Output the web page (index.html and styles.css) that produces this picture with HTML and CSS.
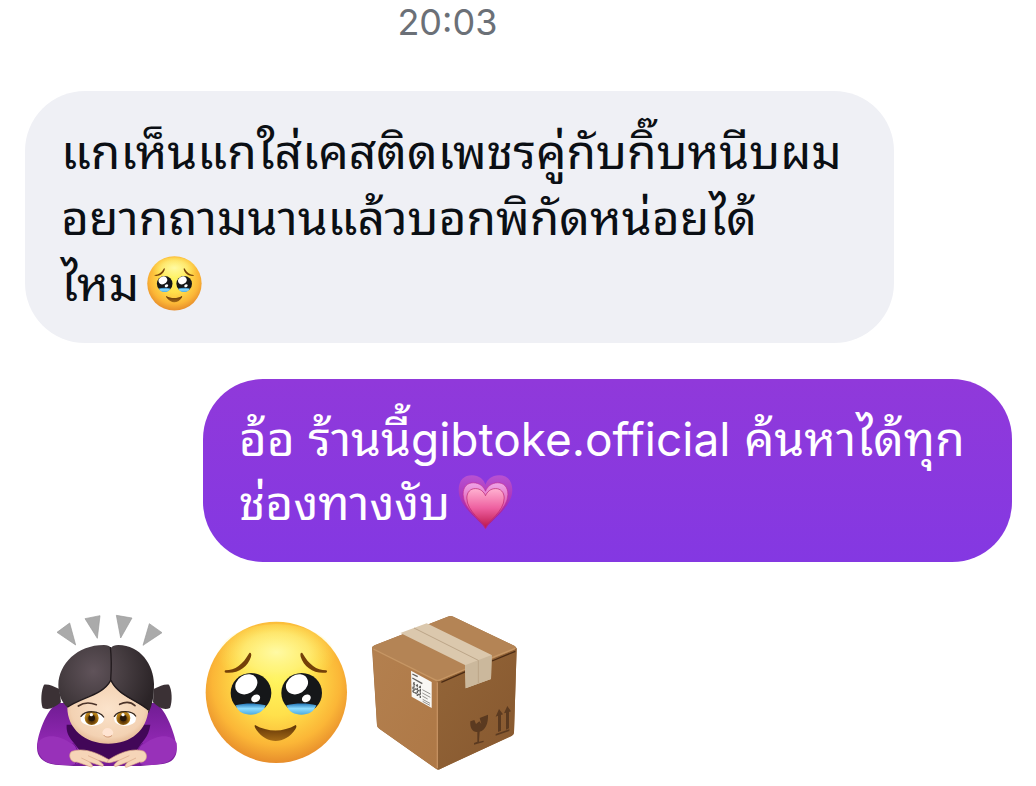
FILE: index.html
```
<!DOCTYPE html>
<html lang="th">
<head>
  <meta charset="UTF-8" />
  <meta name="viewport" content="width=device-width, initial-scale=1" />
  <title>Chat</title>
  <link rel="stylesheet" href="styles.css">
</head>
<body>
  <!-- shared drawings -->
  <svg class="defs" aria-hidden="true">
    <defs>
      <radialGradient id="skin-edge" cx="50%" cy="42%" r="58%">
        <stop offset="0" stop-color="#fff45c" />
        <stop offset=".42" stop-color="#ffe04b" />
        <stop offset=".78" stop-color="#fbb637" />
        <stop offset="1" stop-color="#e78d2b" />
      </radialGradient>
      <radialGradient id="skin-shine" cx="50%" cy="40%" r="50%">
        <stop offset="0" stop-color="#fffcae" stop-opacity=".9" />
        <stop offset=".55" stop-color="#fff88a" stop-opacity=".6" />
        <stop offset="1" stop-color="#fff45c" stop-opacity="0" />
      </radialGradient>
      <linearGradient id="tear" x1="0" y1="0" x2="0" y2="1">
        <stop offset="0" stop-color="#2479ba" />
        <stop offset=".45" stop-color="#8bdcff" />
        <stop offset="1" stop-color="#4dabe0" />
      </linearGradient>
      <linearGradient id="mouth" x1="0" y1="0" x2="0" y2="1">
        <stop offset="0" stop-color="#5e3306" />
        <stop offset="1" stop-color="#a56a17" />
      </linearGradient>
    </defs>
    <symbol id="face" viewBox="30 35 429 429">
      <circle cx="244" cy="249" r="212" fill="url(#skin-edge)" />
      <ellipse cx="244" cy="150" rx="180" ry="106" fill="url(#skin-shine)" />
      <path d="M91 183c30 0 52-17 72-52 5-2 7 3 5 11-9 30-40 52-75 48-5-1-5-5-2-7zM394 183c-30 0-52-17-72-52-5-2-7 3-5 11 9 30 40 52 75 48 5-1 5-5 2-7z" fill="#744009" />
      <g id="eye">
        <ellipse cx="168" cy="251" rx="61" ry="60" fill="#151719" />
        <path d="M122 288c28-7 64-7 90 0-7 20-25 28-45 28s-38-8-45-28z" fill="url(#tear)" />
        <ellipse cx="154" cy="225" rx="35" ry="28" transform="rotate(-32 154 225)" fill="#fff" />
        <ellipse cx="182" cy="267" rx="14" ry="11" transform="rotate(-30 182 267)" fill="#fff" />
      </g>
      <use href="#eye" x="152" />
      <path d="M180 347c38 22 85 22 122 0 4 3 2 8-1 13-31 46-84 47-116 3-4-6-8-13-5-16z" fill="url(#mouth)" />
    </symbol>
  </svg>

  <main class="chat">
    <time class="timestamp">20:03</time>

    <p class="bubble received">
      แกเห็นแกใส่เคสติดเพชรคู่กับกิ๊บหนีบผม<br>
      อยากถามนานแล้วบอกพิกัดหน่อยได้<br>
      ไหม<svg class="emoji" role="img" aria-label="🥹"><use href="#face" /></svg>
    </p>

    <p class="bubble sent">
      อ้อ ร้านนี้<span class="handle">gibtoke.official</span> ค้นหาได้ทุก<br>
      ช่องทางงับ<svg class="emoji" viewBox="0 0 162 162" role="img" aria-label="💗">
        <defs>
          <linearGradient id="heart-out" x1="0" y1="0" x2="0" y2="1">
            <stop offset="0" stop-color="#b852d2" />
            <stop offset=".6" stop-color="#aa2aaf" />
            <stop offset="1" stop-color="#a51b6e" />
          </linearGradient>
          <linearGradient id="heart-mid" x1="0" y1="0" x2="0" y2="1">
            <stop offset="0" stop-color="#efa5e8" />
            <stop offset=".55" stop-color="#df55ad" />
            <stop offset="1" stop-color="#b21c62" />
          </linearGradient>
          <linearGradient id="heart-in" x1="0" y1="0" x2="0" y2="1">
            <stop offset="0" stop-color="#ffb2d1" />
            <stop offset=".5" stop-color="#ee60a0" />
            <stop offset="1" stop-color="#bd174c" />
          </linearGradient>
        </defs>
        <path d="M81 160C72 136 2 98 2 45 2 14 19 1 41 1c22 0 35 13 40 28C86 14 99 1 121 1c22 0 39 13 39 44 0 53-70 91-79 115z" fill="url(#heart-out)" />
        <path d="M81 158C74 137 15 102 15 57c0-23 13-34 30-34 19 0 31 12 36 25 5-13 17-25 36-25 17 0 30 11 30 34 0 45-59 80-66 101z" fill="url(#heart-mid)" stroke="#c12c92" stroke-width="2" />
        <path d="M81 155C76 138 26 108 26 68c0-18 11-28 25-28 16 0 25 10 30 21 5-11 14-21 30-21 14 0 25 10 25 28 0 40-50 70-55 87z" fill="url(#heart-in)" stroke="#b9236c" stroke-width="2" />
      </svg>
    </p>

    <div class="big-emojis">
      <svg class="bow" viewBox="45 40 444 474" role="img" aria-label="🙇🏻‍♀️">
        <defs>
          <radialGradient id="skin" cx="50%" cy="45%" r="60%">
            <stop offset="0" stop-color="#fbe3cb" />
            <stop offset=".75" stop-color="#f3d2b3" />
            <stop offset="1" stop-color="#e0b18c" />
          </radialGradient>
          <radialGradient id="hair" gradientUnits="userSpaceOnUse" cx="220" cy="215" r="185">
            <stop offset="0" stop-color="#60535a" />
            <stop offset=".5" stop-color="#463d41" />
            <stop offset="1" stop-color="#2b2427" />
          </radialGradient>
          <linearGradient id="sleeve" x1="0" y1="0" x2="0" y2="1">
            <stop offset="0" stop-color="#701c93" />
            <stop offset=".6" stop-color="#8f27b1" />
            <stop offset="1" stop-color="#741b96" />
          </linearGradient>
          <radialGradient id="iris" cx="50%" cy="65%" r="50%">
            <stop offset="0" stop-color="#3b2206" />
            <stop offset=".45" stop-color="#6c4207" />
            <stop offset="1" stop-color="#b98218" />
          </radialGradient>
        </defs>
        <g fill="#aaa" stroke="#999" stroke-width="2">
          <path d="M111 98l38-28 18 66zM195 57l45-9-8 68zM289 47l47 8-34 60zM388 72l38 27-57 38z" />
        </g>
        <path d="M112 310c-34 22-60 96-61 132-1 34 24 49 55 53l55 4h200l60-5c34-3 52-21 49-53-5-38-31-109-62-131z" fill="url(#sleeve)" />
        <path d="M140 375c-3 40 25 50 35 75l90 38 88-38c10-24 33-35 38-75z" fill="#420758" />
        <path d="M53 430c17-27 60-28 105 4 25 14 35 35 16 57-20 9-62 5-82 0-26-7-41-28-39-61zM470 430c-16-27-55-28-98 3-26 14-37 36-17 58 17 9 55 5 75 0 28-7 43-28 40-61z" fill="#9831b9" />
        <path d="M158 430c17 15 20 38 8 63M368 430c-17 15-20 38-8 63" fill="none" stroke="#6c178a" stroke-width="3" />
        <path d="M118 268c-19-8-31-15-46-13-8 15-11 49-4 70 18 8 35-1 55-17zM401 268c19-8 31-15 46-13 9 15 11 49 3 70-17 8-33 0-51-17z" fill="#3b3135" />
        <path d="M115 255c2-62 56-119 137-119 11 0 16 3 21 8 5-5 11-8 22-8 66 0 106 60 107 116 0 37-4 61-16 87-75-30-175-30-242-15-20-15-29-43-29-69z" fill="url(#hair)" />
        <path d="M272 244c-24 43-90 49-130 79 0 64 52 109 123 109 69 0 115-41 120-101-35-29-93-44-113-87z" fill="url(#skin)" />
        <path d="M271 142c4 34 3 72 1 100M272 242c-24 46-90 51-130 81M273 242c20 45 80 60 112 89" fill="none" stroke="#211a1d" stroke-width="4" />
        <path d="M175 319c16-11 35-11 54-4M299 314c17-8 34-7 46 4" fill="none" stroke="#4b3329" stroke-width="5" stroke-linecap="round" />
        <ellipse cx="217" cy="357" rx="35" ry="22" fill="#fff" />
        <ellipse cx="315" cy="357" rx="33" ry="22" fill="#fff" />
        <circle cx="215" cy="355" r="21" fill="url(#iris)" />
        <circle cx="310" cy="355" r="21" fill="url(#iris)" />
        <circle cx="215" cy="355" r="10" fill="#251709" />
        <circle cx="310" cy="355" r="10" fill="#251709" />
        <path d="M183 350c12-18 54-19 68 2M283 350c12-19 53-18 64-1" fill="none" stroke="#35271e" stroke-width="4" stroke-linecap="round" />
        <circle cx="214" cy="345" r="5" fill="#fff" />
        <circle cx="309" cy="345" r="5" fill="#fff" />
        <path d="M247 399c2-19 29-19 33 0-3 16-29 17-33 0z" fill="#ffe4d2" />
        <path d="M251 406c5 8 19 8 25 1" fill="none" stroke="#cf9876" stroke-width="3" />
        <g fill="#f6d5b8" stroke="#d8a585" stroke-width="2">
          <path d="M156 455c29-10 65-2 105 22 13 5 11 14-3 11l-23-6c10 8 21 15 12 18l-38-13c8 9 13 14 4 15l-42-15c-22 4-28-26-15-32z" />
          <path d="M370 454c-28-8-62 0-99 23-13 6-10 15 4 11l22-6c-11 9-20 15-11 19l37-14c-8 10-12 15-3 16l39-16c22 5 27-26 11-33z" />
        </g>
        <path d="M209 487l-25-12M235 482l-31-14M297 482l31-14M323 487l25-12" stroke="#d8a585" stroke-width="2" />
      </svg>

      <svg class="face" role="img" aria-label="🥹"><use href="#face" /></svg>

      <svg class="box" viewBox="30 27 444 471" role="img" aria-label="📦">
        <defs>
          <linearGradient id="box-left" x1="0" y1="0" x2="1" y2="1">
            <stop offset="0" stop-color="#b3804f" />
            <stop offset="1" stop-color="#ae7846" />
          </linearGradient>
          <linearGradient id="box-right" x1="0" y1="0" x2="1" y2="1">
            <stop offset="0" stop-color="#936538" />
            <stop offset="1" stop-color="#87582f" />
          </linearGradient>
        </defs>
        <path d="M36 129q0-5 8-8L263 35q9-4 17 0l184 88q6 4 6 10l-8 248q0 7-7 11L242 491q-8 5-16-1L58 371q-7-5-7-11z" fill="#9e6c3d" />
        <path d="M37 127l195 100v267L58 371q-7-5-7-11z" fill="url(#box-left)" />
        <path d="M232 227l238-98-8 254q0 6-7 10L242 491q-5 4-10 3z" fill="url(#box-right)" />
        <path d="M36 129q0-5 8-8L263 35q9-4 17 0l184 88q8 6-1 11L242 226q-9 5-18 0L40 135q-4-2-4-6z" fill="#b48455" />
        <path d="M40 132l184 92q9 5 18 0l75-32M396 158l70-28" fill="none" stroke="#c69664" stroke-width="4" />
        <path d="M244 232l73-32M396 168l70-29" stroke="#4b2b14" stroke-width="4" />
        <path d="M232 232v258" stroke="#c49060" stroke-width="4" />
        <path d="M121 84l79-29 195 95-2 72-76 28-2-70z" fill="#dbc8ad" />
        <path d="M315 181l80-31-2 72-76 28z" fill="#cbb89c" />
        <path d="M162 69l193 97v70" fill="none" stroke="#bca588" stroke-width="3" />
        <path d="M153 197l62 34v78l-60-34z" fill="#f8f7f4" />
        <g fill="none" stroke="#62605d" stroke-width="4">
          <path d="M157 207l16 8M157 219l30 17" />
          <path d="M159 236l22 12v12l-22-12v12l23 12M162 231v33M172 238v35M181 242v39" stroke-dasharray="7 3" />
          <path d="M187 254l24 13M187 264l24 13M187 273l16 9M188 283l22 12M188 289l22 12" stroke-width="2" />
        </g>
        <g fill="#5b3a20">
          <path d="M331 349l12-4 5 12 10-8 6 8-5-18 25-10c1 27-8 46-25 51l-2 30 14-3v4l-29 8v-5l10-4v-29c-14 1-23-11-21-32z" />
          <path d="M407 335l10-23 12 16-6 2v47l-9 4v-49zM432 325l10-22 11 16-6 2v49l-9 4v-51zM407 387l41-14v5l-41 14z" />
        </g>
      </svg>
    </div>
  </main>
</body>
</html>
```
FILE: styles.css
```
* {
  box-sizing: border-box;
}

body {
  margin: 0;
  background: #fff;
  font-family: Inter, "Noto Sans Thai Looped", "Noto Looped Thai", Loma, Garuda, Waree, Umpush, "Noto Sans Thai", sans-serif;
}

.defs {
  position: absolute;
  width: 0;
  height: 0;
}

.chat {
  display: flex;
  flex-direction: column;
  padding: 0 24px 0 25px;
}

.timestamp {
  align-self: flex-start;
  width: 86%;
  padding: 2px 4px 0 0;
  margin-bottom: 49px;
  text-align: center;
  font-size: 36px;
  line-height: 40px;
  color: #6b7077;
}

.bubble {
  margin: 0;
  padding: 28px 36px 26px;
  border-radius: 60px;
  font-size: 48px;
  line-height: 66px;
  white-space: nowrap;
}

.received {
  align-self: flex-start;
  width: 88%;
  background: #eff0f5;
  color: #0b0f14;
}

.sent {
  align-self: flex-end;
  width: 82%;
  margin-top: 36px;
  padding-bottom: 27px;
  background: linear-gradient(#9039da, #8438e2);
  color: #fff;
  line-height: 64px;
}

.handle {
  font-size: 46px;
}

.emoji {
  width: 55px;
  height: 55px;
  margin-left: 8px;
  vertical-align: -10px;
}

.big-emojis {
  display: flex;
  align-items: center;
  gap: 22px;
  padding: 51px 10px 0;
}

.bow {
  width: 148px;
  height: 158px;
}

.face {
  width: 143px;
  height: 143px;
}

.box {
  width: 148px;
  height: 157px;
}
```
